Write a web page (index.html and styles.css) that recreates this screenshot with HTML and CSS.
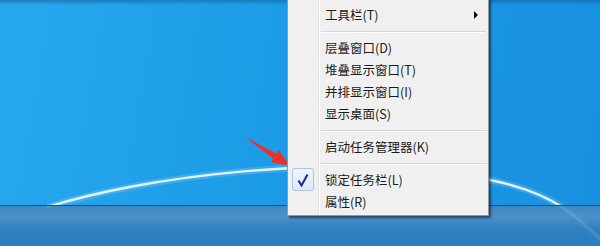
FILE: index.html
```html
<!DOCTYPE html>
<html lang="zh-CN">
<head>
<meta charset="utf-8">
<title>任务栏菜单</title>
<link rel="stylesheet" href="styles.css">
</head>
<body>
<div class="screen">
  <svg class="swoosh" width="600" height="246" viewBox="0 0 600 246">
    <path d="M48 207 C 140 178, 330 150, 490 180 C 520 186, 545 196, 562 207 C 578 218, 592 230, 604 244" fill="none" stroke="#ffffff" stroke-width="7" opacity="0.15"/>
    <path d="M48 207 C 140 178, 330 150, 490 180 C 520 186, 545 196, 562 207 C 578 218, 592 230, 604 244" fill="none" stroke="#eef9ff" stroke-width="2.5" stroke-linecap="round" opacity="0.92"/>
  </svg>
  <div class="wallpaper"></div>
  <div class="taskbar"></div>

  <svg class="annot" width="600" height="246" viewBox="0 0 600 246">
    <polygon points="245,137 276.5,153.7 278.7,150.3 290,166 271.1,162.1 273.3,158.7" fill="#ee2f27"/>
  </svg>

  <div class="menu">
    <div class="item has-sub"><span class="label">工具栏(T)</span><span class="sub-arrow"></span></div>
    <div class="sep"></div>
    <div class="item"><span class="label">层叠窗口(D)</span></div>
    <div class="item"><span class="label">堆叠显示窗口(T)</span></div>
    <div class="item"><span class="label">并排显示窗口(I)</span></div>
    <div class="item"><span class="label">显示桌面(S)</span></div>
    <div class="sep"></div>
    <div class="item"><span class="label">启动任务管理器(K)</span></div>
    <div class="sep"></div>
    <div class="item checked">
      <span class="check">
        <svg width="12" height="14" viewBox="0 0 12 14"><path d="M1.5 7.5 L4.5 12.5 L10.5 1.5" fill="none" stroke="#1c2a8c" stroke-width="2" stroke-linejoin="miter"/></svg>
      </span>
      <span class="label">锁定任务栏(L)</span>
    </div>
    <div class="item"><span class="label">属性(R)</span></div>
  </div>
</div>
</body>
</html>
```

FILE: styles.css
```css
html, body {
  margin: 0;
  padding: 0;
}
body {
  width: 600px;
  height: 246px;
  overflow: hidden;
  font-family: "Noto Sans CJK SC", "Noto Sans", sans-serif;
}
.screen {
  position: relative;
  width: 600px;
  height: 246px;
  display: flex;
  flex-direction: column;
  background: #1c8ed8;
}
.swoosh {
  position: absolute;
  left: 0;
  top: 0;
  z-index: 1;
}
.wallpaper {
  height: 205px;
  background:
    linear-gradient(to bottom, rgba(20,90,150,0.55) 0px, rgba(20,90,150,0) 5px),
    linear-gradient(100deg, #26a8ee 0%, #1c9ce6 45%, #1890e0 100%);
}
.taskbar {
  position: relative;
  z-index: 2;
  flex: 1;
  border-top: 1px solid #1b4f78;
  background:
    linear-gradient(to bottom, rgba(255,255,255,0.08) 0px, rgba(255,255,255,0.16) 10px, rgba(255,255,255,0.03) 22px, rgba(255,255,255,0) 40px),
    rgba(44,122,186,0.86);
}
.annot {
  position: absolute;
  left: 0;
  top: 0;
  z-index: 3;
  pointer-events: none;
}
.menu {
  position: absolute;
  z-index: 4;
  left: 287px;
  top: -2px;
  width: 198px;
  padding: 5px 1px 2px 1px;
  background: #f0f0f0;
  border: 1px solid #979797;
  box-shadow: 2px 2px 2px rgba(0,0,0,0.5);
  background-image: linear-gradient(to right, transparent 30px, #e2e3e3 30px, #e2e3e3 31px, #ffffff 31px, #ffffff 32px, transparent 32px);
}
.item {
  position: relative;
  height: 22px;
  display: flex;
  align-items: center;
  padding-left: 36px;
  font-size: 12.5px;
  color: #1b1b1b;
}
.label {
  line-height: 22px;
}
.sub-arrow {
  position: absolute;
  right: 9px;
  top: 7px;
  width: 0;
  height: 0;
  border-top: 4px solid transparent;
  border-bottom: 4px solid transparent;
  border-left: 4px solid #111;
}
.sep {
  height: 11px;
  margin-left: 32px;
  margin-right: 1px;
  background: linear-gradient(to bottom, transparent 5px, #d7d7d7 5px, #d7d7d7 6px, #ffffff 6px, #ffffff 7px, transparent 7px);
}
.check {
  position: absolute;
  left: 3px;
  top: -1px;
  width: 20px;
  height: 21px;
  border: 1px solid #a9c6e8;
  border-radius: 3px;
  background: linear-gradient(to bottom, #eef4fc, #dde9f8);
  display: flex;
  align-items: center;
  justify-content: center;
}
```
